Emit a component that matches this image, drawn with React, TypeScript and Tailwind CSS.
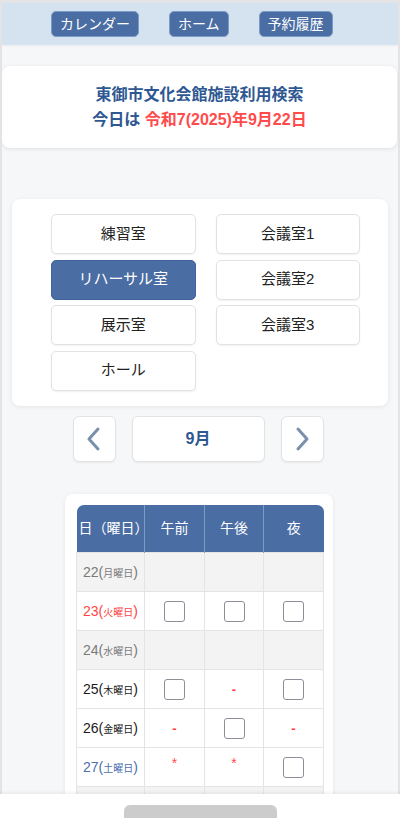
import React from 'react';

const rooms = [
    { name: '練習室', active: false },
    { name: '会議室1', active: false },
    { name: 'リハーサル室', active: true },
    { name: '会議室2', active: false },
    { name: '展示室', active: false },
    { name: '会議室3', active: false },
    { name: 'ホール', active: false },
];

type Slot = 'none' | 'box' | 'dash' | 'star';

interface DayRow {
    day: number;
    week: string;
    tone: 'closed' | 'red' | 'black' | 'blue';
    slots: Slot[];
}

const days: DayRow[] = [
    { day: 22, week: '月曜日', tone: 'closed', slots: ['none', 'none', 'none'] },
    { day: 23, week: '火曜日', tone: 'red', slots: ['box', 'box', 'box'] },
    { day: 24, week: '水曜日', tone: 'closed', slots: ['none', 'none', 'none'] },
    { day: 25, week: '木曜日', tone: 'black', slots: ['box', 'dash', 'box'] },
    { day: 26, week: '金曜日', tone: 'black', slots: ['dash', 'box', 'dash'] },
    { day: 27, week: '土曜日', tone: 'blue', slots: ['star', 'star', 'box'] },
];

const toneClass: Record<DayRow['tone'], string> = {
    closed: 'text-[#7a7a7a]',
    red: 'text-[#ff4545]',
    black: 'text-[#1a1a1a]',
    blue: 'text-[#4d6fae]',
};

const SlotCell: React.FC<{ slot: Slot }> = ({ slot }) => {
    if (slot === 'box') {
        return <span className="inline-block w-[21px] h-[21px] rounded-[3px] border border-[#8e8e98] bg-white align-middle" />;
    }
    if (slot === 'dash') {
        return <span className="text-[#ff3b3b] text-[13px] font-bold">-</span>;
    }
    if (slot === 'star') {
        return <span className="text-[#ff4d4d] text-[14px] relative -top-[4px]">*</span>;
    }
    return null;
};

const Chevron: React.FC<{ dir: 'left' | 'right' }> = ({ dir }) => (
    <svg width="16" height="26" viewBox="0 0 16 26" fill="none">
        <path
            d={dir === 'left' ? 'M12 3 L3 13 L12 23' : 'M4 3 L13 13 L4 23'}
            stroke="#7a8faa"
            strokeWidth="3"
            strokeLinecap="round"
            strokeLinejoin="round"
        />
    </svg>
);

export default function App() {
    return (
        <div
            className="w-[400px] h-[818px] overflow-hidden bg-[#f6f7f9] border-t-[3px] border-x-2 border-[#e4e4e6] relative"
            style={{ fontFamily: '"Liberation Sans", "Noto Sans CJK JP", sans-serif' }}
        >
            {/* header nav */}
            <div className="h-[42px] bg-[#d5e2f0] flex items-center gap-[30px] pl-[49px] shadow-[0_1px_2px_rgba(0,0,0,0.05)]">
                <button className="h-[26px] px-[8px] rounded-[5px] bg-[#4a6da3] border border-[#7d9bc7] text-white text-[14px] leading-none">カレンダー</button>
                <button className="h-[26px] px-[8px] rounded-[5px] bg-[#4a6da3] border border-[#7d9bc7] text-white text-[14px] leading-none">ホーム</button>
                <button className="h-[26px] px-[8px] rounded-[5px] bg-[#4a6da3] border border-[#7d9bc7] text-white text-[14px] leading-none">予約履歴</button>
            </div>

            {/* title card */}
            <div className="mt-[21px] mr-[1px] h-[82px] bg-white rounded-[8px] shadow-[0_1px_4px_rgba(0,0,0,0.1)] flex flex-col items-center justify-center gap-[3px]">
                <p className="text-[16px] font-bold text-[#2f5892] leading-[22px]">東御市文化会館施設利用検索</p>
                <p className="text-[16px] font-bold text-[#2f5892] leading-[22px]">
                    今日は <span className="text-[#ff4b4b]">令和7(2025)年9月22日</span>
                </p>
            </div>

            {/* room selector */}
            <div className="mt-[51px] mx-[10px] bg-white rounded-[8px] shadow-[0_1px_4px_rgba(0,0,0,0.08)] pt-[15px] pb-[15px] pl-[39px] pr-[28px]">
                <div className="grid grid-cols-2 gap-x-[20px] gap-y-[5.5px]">
                    {rooms.map((r) => (
                        <button
                            key={r.name}
                            className={
                                r.active
                                    ? 'h-[40px] rounded-[5px] bg-[#4a6da3] border border-[#3f649c] text-white text-[15px]'
                                    : 'h-[40px] rounded-[5px] bg-white border border-[#e2e2e2] shadow-[0_1px_2px_rgba(0,0,0,0.06)] text-[#222] text-[15px]'
                            }
                        >
                            {r.name}
                        </button>
                    ))}
                </div>
            </div>

            {/* month nav */}
            <div className="mt-[10px] flex justify-center items-center gap-[16px] pr-[4px]">
                <button className="w-[43px] h-[46px] bg-white rounded-[6px] border border-[#e3e3e3] shadow-[0_1px_2px_rgba(0,0,0,0.06)] flex items-center justify-center">
                    <Chevron dir="left" />
                </button>
                <div className="w-[133px] h-[46px] bg-white rounded-[6px] border border-[#e3e3e3] shadow-[0_1px_2px_rgba(0,0,0,0.06)] flex items-center justify-center text-[16px] font-bold text-[#2f5892]">
                    9月
                </div>
                <button className="w-[43px] h-[46px] bg-white rounded-[6px] border border-[#e3e3e3] shadow-[0_1px_2px_rgba(0,0,0,0.06)] flex items-center justify-center">
                    <Chevron dir="right" />
                </button>
            </div>

            {/* calendar table */}
            <div className="mt-[32px] ml-[63px] w-[268px] bg-white rounded-[8px] shadow-[0_1px_4px_rgba(0,0,0,0.08)] pt-[11px] pl-[11px] pr-[10px] pb-[12px]">
                <table className="w-[247px] border-collapse table-fixed">
                    <thead>
                        <tr className="bg-[#4a6da3] text-white text-[14px] h-[48px]">
                            <th className="w-[68px] font-normal rounded-tl-[7px] border-r border-[#7f9ac2] text-left pl-[2px]">日（曜日）</th>
                            <th className="w-[60px] font-normal border-r border-[#7f9ac2]">午前</th>
                            <th className="w-[59px] font-normal border-r border-[#7f9ac2]">午後</th>
                            <th className="w-[60px] font-normal rounded-tr-[7px]">夜</th>
                        </tr>
                    </thead>
                    <tbody>
                        {days.map((d) => (
                            <tr key={d.day} className={d.tone === 'closed' ? 'bg-[#f3f3f3] h-[39px]' : 'bg-white h-[39px]'}>
                                <td className={`border border-[#e4e4e4] text-center ${toneClass[d.tone]}`}>
                                    <span className="text-[14px]">{d.day}(</span>
                                    <span className="text-[10px]">{d.week}</span>
                                    <span className="text-[14px]">)</span>
                                </td>
                                {d.slots.map((s, i) => (
                                    <td key={i} className="border border-[#e4e4e4] text-center">
                                        <SlotCell slot={s} />
                                    </td>
                                ))}
                            </tr>
                        ))}
                        <tr className="bg-[#f3f3f3] h-[39px]">
                            <td className="border border-[#e4e4e4]" />
                            <td className="border border-[#e4e4e4]" />
                            <td className="border border-[#e4e4e4]" />
                            <td className="border border-[#e4e4e4]" />
                        </tr>
                    </tbody>
                </table>
            </div>

            {/* bottom action bar */}
            <div className="fixed left-0 right-0 bottom-0 h-[24px] bg-white shadow-[0_-1px_4px_rgba(0,0,0,0.08)] flex justify-center">
                <div className="mt-[11px] w-[153px] h-[30px] rounded-[6px] bg-[#cccccc]" />
            </div>
        </div>
    );
}
